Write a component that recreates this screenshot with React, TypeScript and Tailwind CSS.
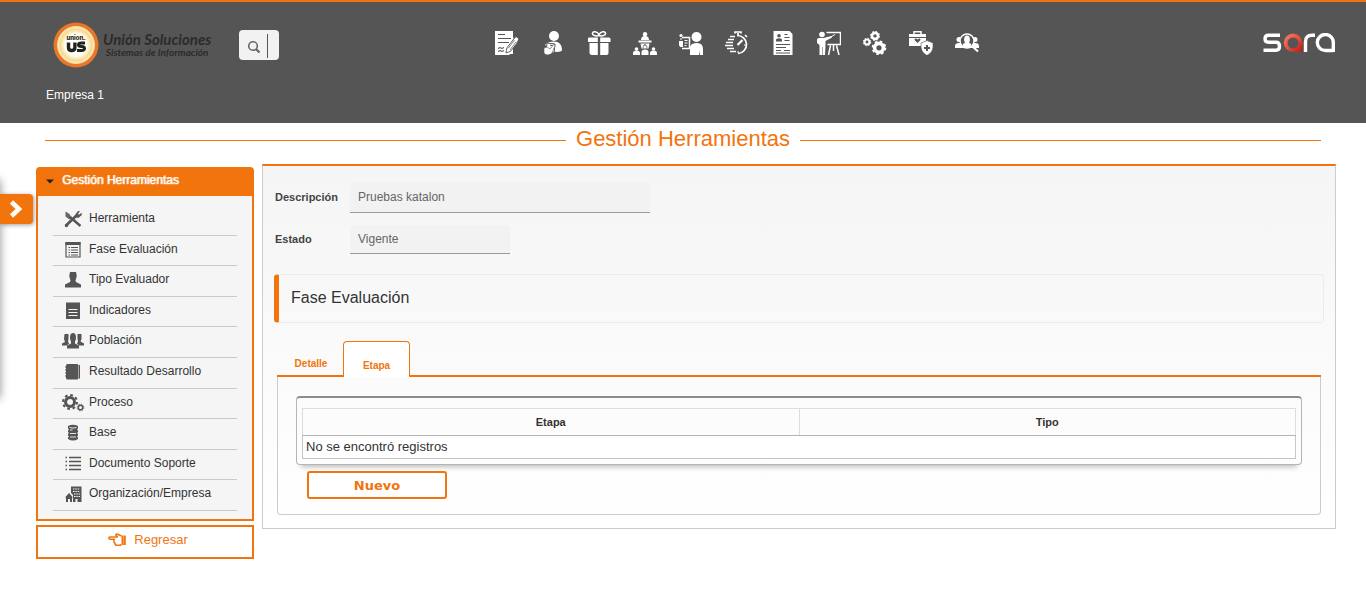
import type { ReactNode } from 'react';

type Item = { label: string; icon: ReactNode };

/* ---------- header tool icons, 24 x 24 ---------- */
const dark = '#555555';

const tools: Item[] = [
  {
    label: 'Registro',
    icon: (
      <>
        <path d="M0 0h18v6l1 2-1 2v13H15l-1 1H0z" />
        <g stroke={dark} strokeWidth="1.1" fill="none">
          <path d="M3 3.500h7M3 7.500h13M3 11.500h11M3 17.500l2-1 2 1 2-1M3 20.500l2-1 2 1 2-1" />
        </g>
        <path d="M21 5.500l3 2.300-2.500 5-6 7.500-4.500 1.700.8-5 6.200-8z" stroke={dark} strokeWidth=".9" />
        <path d="M13 17.500l6.500-8.500M15 19l6-8" stroke={dark} strokeWidth=".7" />
      </>
    ),
  },
  {
    label: 'Personal',
    icon: (
      <>
        <circle cx="13" cy="5" r="5" />
        <path d="M4 14c2-3 5-3.500 9-3.500 5 0 8 3 8 9-3 2-6 1.500-8 1z" />
        <path d="M6 12l8 1-1 9-8-1z" stroke={dark} strokeWidth="1" />
        <path d="M9 14l3 1-3 4" stroke={dark} strokeWidth="1" fill="none" />
        <path d="M3 17l3-1 3 2 4-5 1 2-3 7c-2 2-6 3-8 0z" stroke={dark} strokeWidth=".6" />
      </>
    ),
  },
  {
    label: 'Beneficios',
    icon: (
      <>
        <path d="M1 7.500q0-1 1-1h8.800v4.500H1zM13.200 6.500H22q1.500 0 1.500 1.500v3H13.200zM2.500 12h8.300v12H5q-2.500 0-2.500-2zM13.200 12H21.500V22q0 2-2 2h-6.300z" />
        <path d="M12 4.500C9 5.500 5 4.500 5.500 2.200S10 .2 12 3.500c2-3.300 6-3.600 6.500-1.300S15 5.500 12 4.500z" fill="none" stroke="#fff" strokeWidth="1.500" />
      </>
    ),
  },
  {
    label: 'Comité',
    icon: (
      <>
        <circle cx="12" cy="3.300" r="2.200" />
        <path d="M8 9q0-4 4-4t4 4zM5.500 9.500h13v2h-13zM7.500 12.500h9l-1 5h-7z" />
        <circle cx="12" cy="16" r="2" stroke={dark} strokeWidth=".7" />
        <circle cx="3.500" cy="18" r="1.800" />
        <circle cx="20.500" cy="18" r="1.800" />
        <path d="M0 24v-2q0-2.500 3.500-2.500T7 22v2zM8.500 24v-3q0-2.500 3.500-2.500t3.500 2.500v3zM17 24v-2q0-2.500 3.500-2.500T24 22v2z" />
        <path d="M12 13v1.500" stroke={dark} />
      </>
    ),
  },
  {
    label: 'Capacitación',
    icon: (
      <>
        <circle cx="17.500" cy="6" r="5" />
        <path d="M11 24v-8q1-4 7-4t6 6v6h-3v-4l-1 4zM0 10h4v6H1l-1-2z" />
        <path d="M3 6.500h7.500v11H3" fill="none" stroke="#fff" strokeWidth="1.500" />
        <path d="M5.500 9.500h3M5.500 12h3M5.500 14.500h2" stroke="#fff" />
        <circle cx="2" cy="4.500" r="1.600" />
        <path d="M1 8h2" stroke="#fff" />
      </>
    ),
  },
  {
    label: 'Tiempos',
    icon: (
      <>
        <path d="M12 4.500a9 9 0 1 1 1 18M10 2.500V1h6v1.500M13 2v2.500M20 4l2 2" fill="none" stroke="#fff" strokeWidth="1.700" />
        <path d="M5 5.500h5M3 8.500h6M1 11.500h7M0 14.500h8M2 17.500h7M5 20.500h6" stroke="#fff" strokeWidth="1.500" />
        <path d="M17.500 9l-5 5" stroke="#fff" strokeWidth="2.200" />
        <path d="M19 14h2M13 20v2" stroke="#fff" />
      </>
    ),
  },
  {
    label: 'Hoja de vida',
    icon: (
      <>
        <path d="M2.500 0h16L21.500 3v21h-19z" />
        <circle cx="8" cy="4.800" r="1.800" fill={dark} />
        <path d="M5 10.500V9q0-1.800 3-1.800t3 1.800v1.500z" fill={dark} />
        <path d="M13.500 3.500h3M13.500 6.500h5M13.500 9.500h5M5 13.500h14M5 16.500h10M5 19.500h5M13 19.500h6M5 22h14" stroke={dark} strokeWidth="1.200" />
      </>
    ),
  },
  {
    label: 'Formación',
    icon: (
      <>
        <circle cx="5" cy="3.500" r="2.800" />
        <path d="M0 9q0-2 2-2h5l3-1 5-1v1.500L8.500 10v4L8 24H5.500v-8H5v8H2.500V14L0 12z" />
        <path d="M9.500 1.500h14v12h-13M13.500 14.500L11.500 24M19.500 14.500l2.500 9.500M16.500 14v6" fill="none" stroke="#fff" strokeWidth="1.500" />
        <path d="M12 7l6-3.500" stroke="#fff" />
      </>
    ),
  },
  {
    label: 'Procesos',
    icon: (
      <g fill="none" stroke="#fff">
        <circle cx="12" cy="4.900" r="3" strokeWidth="2.600" />
        <circle cx="12" cy="4.900" r="4.600" strokeWidth="1" strokeDasharray="1.800 1.800" />
        <circle cx="4" cy="11" r="2.500" strokeWidth="2.200" />
        <circle cx="4" cy="11" r="3.800" strokeWidth="1" strokeDasharray="1.500 1.500" />
        <circle cx="16" cy="16.800" r="4.400" strokeWidth="3.600" />
        <circle cx="16" cy="16.800" r="6.500" strokeWidth="1.600" strokeDasharray="2.550 2.550" />
      </g>
    ),
  },
  {
    label: 'Salud ocupacional',
    icon: (
      <>
        <path d="M5 3V.8h7V3" fill="none" stroke="#fff" strokeWidth="1.500" />
        <path d="M0 3h17v3H0zM0 7h17v3l-5 2v3H0z" />
        <path d="M8.500 12L5.500 9q0-2 1.500-1.500l1.500 1L10 7.500q1.500-.5 1.500 1.500z" fill={dark} />
        <path d="M18 9.500l6 2.500q1 9-6 12.500-7-3.500-6-12.500z" stroke={dark} strokeWidth=".6" />
        <path d="M18 14v6M15 17h6" stroke={dark} strokeWidth="2" />
      </>
    ),
  },
  {
    label: 'Selección',
    icon: (
      <>
        <circle cx="4" cy="8.500" r="2.500" />
        <circle cx="20" cy="8.500" r="2.500" />
        <path d="M0 17v-2q0-3 4-3h16q4 0 4 3v2z" />
        <circle cx="12" cy="10" r="7" fill={dark} stroke="#fff" strokeWidth="1.500" />
        <ellipse cx="12" cy="8.500" rx="2.900" ry="4" />
        <path d="M7.500 15q0-3.500 4.500-3.500t4.500 3.500q-4.500 3-9 0z" />
        <path d="M17 15l6 5.500" stroke="#fff" strokeWidth="2.200" />
      </>
    ),
  },
];

/* ---------- sidebar icons, 24 x 20 ---------- */
const menu: Item[] = [
  {
    label: 'Herramienta',
    icon: (
      <>
        <path d="M5 16.500L15.500 6.500" stroke={dark} strokeWidth="2.600" />
        <path d="M14 6l3-4 2 .3-2 2.500 1 1 2.500-2 .3 2.200-3.500 3-3-1z" />
        <path d="M4.500 2.500l4 2.500 2 3.500-2 2-4-3z" opacity=".9" />
        <path d="M9 8l10.500 9" stroke={dark} strokeWidth="2.400" />
        <circle cx="5.500" cy="16.500" r="1.700" />
      </>
    ),
  },
  {
    label: 'Fase Evaluación',
    icon: (
      <>
        <path d="M5 2.500h14v14.500H5z" fill="none" stroke={dark} strokeWidth="1.200" />
        <path d="M4.500 2h15v3h-15z" />
        <path d="M7.500 7.500h1.500M7.500 10h1.500M7.500 12.500h1.500M7.500 15h1.500M10 7.500h7M10 10h7M10 12.500h7M10 15h7" stroke={dark} strokeWidth="1.200" />
      </>
    ),
  },
  {
    label: 'Tipo Evaluador',
    icon: <path d="M9 2h6l.8 4-1.300 4.500.5 1.500 5 2.500V17.500H4v-3L9 12l.5-1.500L8.200 6z" />,
  },
  {
    label: 'Indicadores',
    icon: (
      <>
        <path d="M5 1.500h14V18H5z" />
        <path d="M7.500 8.500h9M7.500 11.500h9M7.500 14.500h9" stroke="#f5f5f5" strokeWidth="1.200" />
      </>
    ),
  },
  {
    label: 'Población',
    icon: (
      <>
        <ellipse cx="12" cy="6.500" rx="3" ry="4.500" />
        <path d="M6 17.500v-3l4-2v-3h4v3l4 2v3z" />
        <path d="M3.500 3h4v5L7 10.500l1 2-2 2H1v-2l3-1.500-1-3zM16.500 3h4v5l-1 2.500 3.500 2V14.500h-5L16 12.500l1-2-.5-2.500z" />
      </>
    ),
  },
  {
    label: 'Resultado Desarrollo',
    icon: (
      <>
        <path d="M6.500 2h9.500q1.500 0 1.500 1.500V16q0 1.500-1.500 1.500H6.500q-1.500 0-1.500-1.500V3.500Q5 2 6.500 2z" />
        <path d="M18.500 3v13.500" stroke={dark} strokeWidth="1" />
        <path d="M4 5h2M4 8h2M4 11h2M4 14h2" stroke={dark} />
      </>
    ),
  },
  {
    label: 'Proceso',
    icon: (
      <g fill="none" stroke={dark}>
        <circle cx="9" cy="9" r="4.500" strokeWidth="3" />
        <circle cx="9" cy="9" r="7" strokeWidth="2" strokeDasharray="2.750 2.750" />
        <circle cx="19.500" cy="14.500" r="2.200" strokeWidth="1.400" />
        <circle cx="19.500" cy="14.500" r="3.300" strokeWidth="1" strokeDasharray="1.300 1.300" />
      </g>
    ),
  },
  {
    label: 'Base',
    icon: (
      <>
        <path d="M7 3q5-2.500 10 0v2.500l-1 1 1 1V9l-1 1 1 1v1.500l-1 1 1 1V16q-5 3-10 0v-1.500l1-1-1-1V11l1-1-1-1V7.500l1-1-1-1z" />
        <path d="M8.500 4.500q3.500 1.200 7 0M9 7h2.500M9 10.500h6M9 14h6" stroke="#f5f5f5" fill="none" strokeWidth=".9" />
      </>
    ),
  },
  {
    label: 'Documento Soporte',
    icon: (
      <path d="M8 3.500h12M8 7.500h12M8 11.500h12M8 15.500h12M4.500 3.500H6M4.500 7.500H6M4.500 11.500H6M4.500 15.500H6" stroke={dark} strokeWidth="1.700" />
    ),
  },
  {
    label: 'Organización/Empresa',
    icon: (
      <>
        <path d="M10 2.500h10.500V18h-4v-3h-2v3H12v-7l-2-2z" />
        <path d="M12 5h7M12 7.500h7M13 10h6M13 12.500h6" stroke="#f5f5f5" strokeWidth="1.200" strokeDasharray="1.500 .8" />
        <path d="M4 13.500l4-4.500 4 4.500h-1V18H9v-3H7v3H5v-4.500z" />
      </>
    ),
  },
];

function CompanyLogo() {
  return (
    <a href="#inicio" className="flex w-[162px] items-center gap-1" aria-label="Unión Soluciones">
      <svg viewBox="0 0 46 46" className="size-[46px] shrink-0" aria-hidden="true">
        <defs>
          <radialGradient id="glow">
            <stop offset="0" stopColor="#fff" />
            <stop offset=".6" stopColor="#fffdf0" />
            <stop offset=".85" stopColor="#f6d98c" />
            <stop offset="1" stopColor="#fdf0cc" />
          </radialGradient>
        </defs>
        <circle cx="23" cy="23" r="22.500" fill="#e9772a" />
        <circle cx="23" cy="23" r="18.500" fill="url(#glow)" stroke="#fbd9a8" strokeWidth="1" />
        <text x="13.500" y="18" fontFamily="Inter, sans-serif" fontWeight="800" fontSize="6" fill="#222">union</text>
        <path d="M29 17.500h3.500" stroke="#d33" />
        <path d="M15.500 20.500v5q0 3 3.200 3t3.200-3v-5" fill="none" stroke="#222" strokeWidth="3.400" />
        <path d="M32 21h-3.500q-3 0-3 1.800t3 1.800q3 0 3 2t-3 1.900H24" fill="none" stroke="#222" strokeWidth="3" />
      </svg>
      <span className="flex flex-col whitespace-nowrap text-center font-[Lato,sans-serif] font-bold italic text-[#2d2a2b]">
        <span className="text-[15px] leading-[15px]">Unión Soluciones</span>
        <span className="text-[10px] leading-[11px]">Sistemas de Información</span>
      </span>
    </a>
  );
}

function SaraLogo() {
  return (
    <svg viewBox="0 0 72 20" className="h-5 w-[72px]" role="img" aria-label="sara">
      <defs>
        <linearGradient id="drop" x1="0" y1="0" x2="1" y2="1">
          <stop offset="0" stopColor="#f5806c" />
          <stop offset=".5" stopColor="#e8503f" />
          <stop offset="1" stopColor="#b01818" />
        </linearGradient>
      </defs>
      <g fill="none" stroke="#fff" strokeWidth="3.400">
        <path d="M17 2.200H5.500Q2 2.200 2 5.700T5.500 9.200H13q3.500 0 3.500 4t-3.500 4H.5" />
        <path d="M42.500 19V9q0-6.800 6.500-6.800h3" />
        <path d="M70.300 19v-9a8 8 0 1 0-8 7.500h8" />
      </g>
      <path fillRule="evenodd" d="M30 .5a9.500 9.500 0 0 1 9.500 9.500v9H30a9.250 9.250 0 0 1 0-18.500zM30 4.500a5.500 5.500 0 1 0 0 11 5.500 5.500 0 0 0 0-11z" fill="url(#drop)" />
    </svg>
  );
}

function Header() {
  return (
    <header className="border-t-2 border-[#f2740d] bg-[#555] pl-[46px] pr-[31px] pb-5 pt-5">
      <div className="flex h-[46px] items-center">
        <div className="flex flex-1 items-center gap-6 pl-[7px]">
          <CompanyLogo />
          <form role="search" className="flex h-[30px] w-10 items-center rounded bg-[#f2f2f2] pl-2" onSubmit={(e) => e.preventDefault()}>
            <button type="submit" aria-label="Buscar" className="shrink-0">
              <svg viewBox="0 0 14 14" className="mt-1 size-[14px]" fill="none" stroke="#666" strokeWidth="1.600" aria-hidden="true">
                <circle cx="6" cy="6" r="4.300" />
                <path d="M9 9l3.500 3.500" strokeWidth="2.200" />
              </svg>
            </button>
            <input type="text" aria-label="Texto a buscar" className="mt-0.5 ml-1.5 h-6 w-3 border-l border-[#555] bg-transparent outline-none" />
          </form>
        </div>
        <nav className="flex gap-[22px] pb-1 pl-[86px]" aria-label="Módulos">
          {tools.map((t) => (
            <a key={t.label} href="#modulo" aria-label={t.label}>
              <svg viewBox="0 0 24 24" className="size-6" fill="#fff" aria-hidden="true">
                {t.icon}
              </svg>
            </a>
          ))}
        </nav>
        <div className="flex flex-1 justify-end pb-1">
          <SaraLogo />
        </div>
      </div>
      <p className="mt-[19px] text-xs leading-4 text-white">Empresa 1</p>
    </header>
  );
}

function Sidebar() {
  return (
    <aside className="mt-[3px] w-[218px] shrink-0">
      <nav className="rounded-t border-2 border-[#f2740d] bg-[#f5f5f5]" aria-label="Gestión Herramientas">
        <button type="button" className="flex h-[27px] w-full items-center gap-2 bg-[#f2740d] pb-1.5 pl-2 text-xs text-white [text-shadow:1px_0_0_#ffffffb0,0_1px_1px_#ffffff60]">
          <svg viewBox="0 0 8 5" className="mt-1 h-[5px] w-2" fill="#222" aria-hidden="true">
            <path d="M0 .5h8l-4 4z" />
          </svg>
          Gestión Herramientas
        </button>
        <ul className="mx-[15px] mt-[9px] mb-2 grid h-[306px] auto-rows-fr">
          {menu.map((m) => (
            <li key={m.label} className="border-b border-[#c9c9c9]">
              <a href="#opcion" className="flex items-center gap-1 pl-2 text-xs text-[#333]">
                <svg viewBox="0 0 24 20" className="mt-1 h-5 w-6" fill={dark} aria-hidden="true">
                  {m.icon}
                </svg>
                <span className="pt-0.5">{m.label}</span>
              </a>
            </li>
          ))}
        </ul>
      </nav>
      <a href="#regresar" className="mt-1 flex h-[34px] items-center justify-center gap-2 border-2 border-[#f2740d] pb-1 pl-1.5 text-[13px] text-[#f2740d]">
        <svg viewBox="0 0 18 14" className="h-3.5 w-[18px]" fill="none" stroke="#f2740d" strokeWidth="1.500" strokeLinejoin="round" aria-hidden="true">
          <path d="M13.500 3L9 1Q7.500.8 8 2.200L9.500 4H2Q.8 4 .8 5T2 6.300h4.500Q5.200 7 6 8.200 5.500 9.500 7 10.200 7 12.300 9 12.300h3l1.500-.8" />
          <path d="M14.500 2.500v9.500M16.800 2.500v9.500" strokeWidth="2" />
        </svg>
        Regresar
      </a>
    </aside>
  );
}

function Content() {
  const label = 'w-[75px] text-[11px] font-bold text-[#444]';
  const field = 'rounded-t border-b border-[#999] bg-[#f2f2f2] px-2 text-xs text-[#666] outline-none';
  return (
    <main className="flex-1 border border-t-2 border-[#ccc] border-t-[#f2740d] bg-linear-to-b from-[#f5f5f5] to-white px-[11px] pt-4 pb-[13px]">
      <div className="flex items-center pl-px">
        <label htmlFor="descripcion" className={label}>Descripción</label>
        <input id="descripcion" readOnly value="Pruebas katalon" className={`h-[31px] w-[300px] ${field}`} />
      </div>
      <div className="mt-3 flex items-center pl-px">
        <label htmlFor="estado" className={label}>Estado</label>
        <input id="estado" readOnly value="Vigente" className={`h-[29px] w-40 ${field}`} />
      </div>

      <h2 className="mt-5 flex h-[49px] items-center rounded border border-l-[5px] border-[#ececec] border-l-[#f2740d] pb-0.5 pl-3 text-base text-[#333]">
        Fase Evaluación
      </h2>

      <div className="mt-[18px] mx-[3px]">
        <div role="tablist" className="flex h-9 items-end border-b-2 border-[#f2740d] text-[10px] font-bold text-[#f2740d]">
          <button type="button" role="tab" aria-selected={false} className="h-6 w-[66px] pl-0.5">Detalle</button>
          <button type="button" role="tab" aria-selected={true} className="-mb-0.5 h-9 w-[67px] rounded-t border border-b-0 border-[#f2740d] bg-white pt-3">Etapa</button>
        </div>
        <section role="tabpanel" aria-label="Etapa" className="rounded-b border border-t-0 border-[#ccc] px-[18px] pt-[19px] pb-[15px]">
          <div className="rounded border border-t-2 border-[#b5b5b5] border-t-[#8c8c8c] px-[5px] pt-[10px] pb-[5px] shadow-[0_7px_5px_-5px_#00000040]">
            <table className="w-full table-fixed border-collapse text-[#333]">
              <thead>
                <tr className="h-[27px] text-[11px]">
                  <th className="border border-[#ddd] border-b-[#b5b5b5]">Etapa</th>
                  <th className="border border-[#ddd] border-b-[#b5b5b5]">Tipo</th>
                </tr>
              </thead>
              <tbody>
                <tr className="h-[23px] bg-white text-[13px] leading-5">
                  <td colSpan={2} className="border border-[#c6c6c6] px-[3px]">No se encontró registros</td>
                </tr>
              </tbody>
            </table>
          </div>
          <button type="button" className="mt-1.5 ml-[11px] block h-7 w-[140px] rounded-[3px] border-2 border-[#f2740d] bg-white pt-0.5 font-['DejaVu_Sans',sans-serif] text-[13px] font-bold text-[#f2740d]">
            Nuevo
          </button>
        </section>
      </div>
    </main>
  );
}

export default function App() {
  return (
    <div className="relative overflow-x-hidden bg-white pb-8 font-['Liberation_Sans',Arial,sans-serif]">
      <Header />
      <h1 className="mx-[45px] flex h-[35px] items-center gap-[10px] text-[22px] text-[#f2740d] before:h-px before:flex-1 before:bg-[#f2740d] after:h-px after:flex-1 after:bg-[#f2740d]">
        <span className="pb-[3px] leading-8">Gestión Herramientas</span>
      </h1>
      <div className="mt-1.5 flex items-start gap-2 pl-9 pr-[30px]">
        <Sidebar />
        <Content />
      </div>
      <div className="absolute -left-5 top-[180px] h-[218px] w-5 shadow-[0_0_10px_#00000070]" />
      <button type="button" aria-label="Abrir panel" className="absolute left-0 top-[194px] flex h-[30px] w-[33px] items-center rounded-r bg-[#f2740d] pl-[9px] shadow-[1px_1px_4px_#00000060]">
        <svg viewBox="0 0 14 18" className="h-[18px] w-[14px]" fill="none" stroke="#fff" strokeWidth="4.500" aria-hidden="true">
          <path d="M2.500 2l7.500 7-7.500 7" />
        </svg>
      </button>
    </div>
  );
}
